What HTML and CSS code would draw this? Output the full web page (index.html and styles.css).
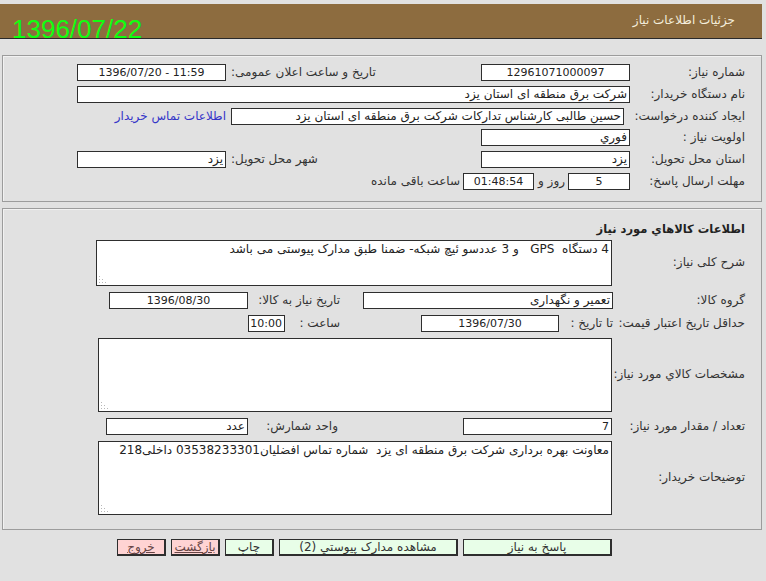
FILE: index.html
```html
<!DOCTYPE html>
<html lang="fa">
<head>
<meta charset="utf-8">
<title>جزئیات اطلاعات نیاز</title>
<link rel="stylesheet" href="styles.css">
</head>
<body>
<div class="page">
  <div class="header">
    <span class="title">جزئیات اطلاعات نیاز</span>
    <span class="date">1396/07/22</span>
  </div>

  <div class="box box1">
    <div class="grid1">
      <div class="lbl">شماره نیاز:</div>
      <div class="inp center num">12961071000097</div>
      <div class="lbl2">تاریخ و ساعت اعلان عمومی:</div>
      <div class="inp center ltr num">1396/07/20 - 11:59</div>

      <div class="lbl">نام دستگاه خریدار:</div>
      <div class="inp span-bd">شرکت برق منطقه ای استان یزد</div>

      <div class="lbl">ایجاد کننده درخواست:</div>
      <div class="inp span-bc">حسین طالبی کارشناس تدارکات شرکت برق منطقه ای استان یزد</div>
      <div class="link">اطلاعات تماس خریدار</div>

      <div class="lbl">اولویت نیاز :</div>
      <div class="inp">فوري</div>
      <div class="fill"></div>

      <div class="lbl">استان محل تحویل:</div>
      <div class="inp">یزد</div>
      <div class="lbl2">شهر محل تحویل:</div>
      <div class="inp">یزد</div>

      <div class="lbl">مهلت ارسال پاسخ:</div>
      <div class="deadline">
        <div class="inp center num days">5</div>
        <span class="txt">روز و</span>
        <div class="inp center num time">01:48:54</div>
        <span class="txt">ساعت باقی مانده</span>
      </div>
    </div>
  </div>

  <div class="box box2">
    <div class="grid2">
      <div class="heading">اطلاعات کالاهاي مورد نیاز</div>

      <div class="lbl">شرح کلی نیاز:</div>
      <div class="cell">
        <textarea class="ta ta1" readonly>4 دستگاه  GPS   و 3 عددسو ئیچ شبکه- ضمنا طبق مدارک پیوستی می باشد</textarea>
        <svg class="grip" width="7" height="7" viewBox="0 0 7 7"><g fill="#b8b8b8"><rect x="0" y="0" width="1" height="1"/><rect x="0" y="3" width="1" height="1"/><rect x="3" y="3" width="1" height="1"/><rect x="0" y="6" width="1" height="1"/><rect x="3" y="6" width="1" height="1"/><rect x="6" y="6" width="1" height="1"/></g></svg>
      </div>

      <div class="lbl">گروه کالا:</div>
      <div class="sub">
        <div class="c1"><div class="inp w250">تعمیر و نگهداری</div></div>
        <div class="c2 lbl3">تاریخ نیاز به کالا:</div>
        <div class="c3"><div class="inp center num w139">1396/08/30</div></div>
      </div>

      <div class="lbl">حداقل تاریخ اعتبار قیمت:</div>
      <div class="sub">
        <div class="c1">
          <span class="until">تا تاریخ :</span>
          <div class="inp center num w138">1396/07/30</div>
        </div>
        <div class="c2">
          <span class="hour">ساعت :</span>
          <div class="inp center num w39">10:00</div>
        </div>
        <div class="c3"></div>
      </div>

      <div class="lbl">مشخصات کالاي مورد نیاز:</div>
      <div class="cell">
        <textarea class="ta ta2" readonly></textarea>
        <svg class="grip" width="7" height="7" viewBox="0 0 7 7"><g fill="#b8b8b8"><rect x="0" y="0" width="1" height="1"/><rect x="0" y="3" width="1" height="1"/><rect x="3" y="3" width="1" height="1"/><rect x="0" y="6" width="1" height="1"/><rect x="3" y="6" width="1" height="1"/><rect x="6" y="6" width="1" height="1"/></g></svg>
      </div>

      <div class="lbl">تعداد / مقدار مورد نیاز:</div>
      <div class="sub">
        <div class="c1"><div class="inp num w149 qty">7</div></div>
        <div class="c2 lbl3 unit">واحد شمارش:</div>
        <div class="c3"><div class="inp w142">عدد</div></div>
      </div>

      <div class="lbl">توضیحات خریدار:</div>
      <div class="cell">
        <textarea class="ta ta2" readonly>معاونت بهره برداری شرکت برق منطقه ای یزد  شماره تماس افضلیان03538233301 داخلی218</textarea>
        <svg class="grip" width="7" height="7" viewBox="0 0 7 7"><g fill="#b8b8b8"><rect x="0" y="0" width="1" height="1"/><rect x="0" y="3" width="1" height="1"/><rect x="3" y="3" width="1" height="1"/><rect x="0" y="6" width="1" height="1"/><rect x="3" y="6" width="1" height="1"/><rect x="6" y="6" width="1" height="1"/></g></svg>
      </div>
    </div>
  </div>

  <div class="buttons">
    <button class="btn green b149">پاسخ به نیاز</button>
    <button class="btn green b179">مشاهده مدارک پیوستي (2)</button>
    <button class="btn green b49">چاپ</button>
    <button class="btn red b49">بازگشت</button>
    <button class="btn red b49">خروج</button>
  </div>
</div>
</body>
</html>
```

FILE: styles.css
```css
html, body {
  margin: 0;
  padding: 0;
  background: #e1e1e1;
}

body {
  font-family: "DejaVu Sans", "Noto Sans", sans-serif;
  font-size: 12px;
  color: #333;
}

.page {
  width: 762px;
  direction: rtl;
  padding-top: 4px;
}

/* header */
.header {
  height: 35px;
  background: #8d6c3f;
  border-bottom: 1px solid #2a2a2a;
  box-sizing: border-box;
  display: flex;
  align-items: center;
  justify-content: space-between;
  padding: 0 27px 0 12px;
}

.title {
  color: #f4eedc;
  font-size: 12px;
  margin-top: -2px;
}

.date {
  font-family: "Liberation Sans", Arial, sans-serif;
  font-size: 26px;
  line-height: 26px;
  color: #10ff10;
  align-self: flex-end;
  margin-bottom: -4px;
  direction: ltr;
}

/* boxes */
.box {
  margin-left: 2px;
  margin-right: 0;
  border: 1px solid #9c9c9c;
  box-shadow: inset 1px 1px 0 #f2f2f2;
  background: #e1e1e1;
}

.box1 {
  margin-top: 16px;
  padding: 8px 0 11px 0;
}

.box2 {
  margin-top: 6px;
  padding: 12px 0 14px 0;
}

/* generic input look */
.inp {
  box-sizing: border-box;
  height: 17px;
  line-height: 15px;
  border: 1px solid #2e2e2e;
  background: #fff;
  color: #222;
  padding: 0 2px;
  white-space: nowrap;
  overflow: hidden;
}

.num { font-size: 11px; }
.center { text-align: center; }
.ltr { direction: ltr; }

.lbl {
  padding-right: 16px;
  line-height: 17px;
  white-space: nowrap;
  align-self: center;
}

/* section 1 */
.grid1 {
  display: grid;
  grid-template-columns: 131px 149px 255px 149px;
  grid-auto-rows: 17px;
  row-gap: 4.8px;
}

.lbl2 {
  line-height: 17px;
  text-align: left;
  padding-left: 5px;
  white-space: nowrap;
}

.span-bd { grid-column: 2 / 5; }
.span-bc { grid-column: 2 / 4; margin-right: 6px; margin-left: 5px; }

.link {
  color: #3535c8;
  line-height: 17px;
  white-space: nowrap;
}

.fill { grid-column: 3 / 5; }

.deadline {
  grid-column: 2 / 4;
  display: flex;
  align-items: center;
}

.days { width: 62px; }
.time { width: 71px; }
.deadline .txt { margin: 0 3px 0 4px; line-height: 17px; white-space: nowrap; }

/* section 2 */
.grid2 {
  display: grid;
  grid-template-columns: 148px 1fr;
  row-gap: 6px;
}

.heading {
  grid-column: 1 / 3;
  padding-right: 16px;
  font-weight: bold;
  font-size: 11.5px;
  line-height: 17px;
  color: #222;
  margin-bottom: -4px;
}

.cell {
  display: flex;
  position: relative;
  justify-self: start;
}

.ta {
  box-sizing: border-box;
  direction: rtl;
  font-family: "DejaVu Sans", sans-serif;
  font-size: 12px;
  color: #222;
  border: 1px solid #2e2e2e;
  background: #fff;
  padding: 1px 2px;
  margin: 0 1px 0 0;
  white-space: pre-wrap;
  display: block;
  resize: none;
}

.grip {
  position: absolute;
  bottom: 3px;
  left: 3px;
}

.ta1 { width: 516px; height: 46px; }
.ta2 { width: 514px; height: 74px; }

.sub {
  display: grid;
  grid-template-columns: 273px 92px 1fr;
  height: 17px;
}

.c1, .c2, .c3 { display: flex; align-items: center; }

.lbl3 {
  line-height: 17px;
  white-space: nowrap;
}

.unit { padding-right: 2px; }

.w250 { width: 250px; }
.w139 { width: 139px; }
.w138 { width: 138px; }
.w39 { width: 39px; }
.w149 { width: 149px; }
.w142 { width: 142px; }

.qty { margin-right: 1px; }

.until {
  width: 54px;
  flex: none;
  white-space: nowrap;
  line-height: 17px;
}

.hour {
  width: 55px;
  flex: none;
  white-space: nowrap;
  line-height: 17px;
}

/* buttons */
.buttons {
  display: flex;
  gap: 5px;
  margin-top: 9px;
  padding-right: 150px;
}

.btn {
  box-sizing: border-box;
  height: 17px;
  padding: 0;
  margin: 0;
  font-family: "DejaVu Sans", sans-serif;
  font-size: 12px;
  line-height: 14px;
  color: #333;
  border: 1px solid #2e2e2e;
  border-right-width: 2px;
  border-bottom-width: 2px;
  border-radius: 0;
}

.green { background: #e8fee8; }
.red { background: #ffd3d3; text-decoration: underline; color: #664444; }

.b149 { width: 149px; }
.b179 { width: 179px; }
.b49 { width: 49px; }
```
